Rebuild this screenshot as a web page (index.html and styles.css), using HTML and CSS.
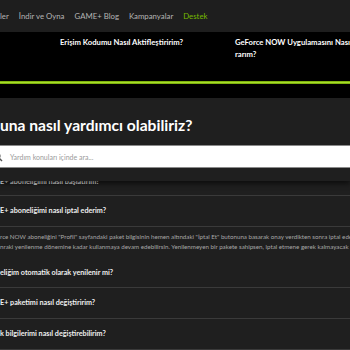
FILE: index.html
```html
<!DOCTYPE html>
<html lang="tr">
<head>
<meta charset="utf-8">
<link rel="stylesheet" href="styles.css">
</head>
<body>
<header class="nav">
  <span class="nav-item">ler</span>
  <span class="nav-item">İndir ve Oyna</span>
  <span class="nav-item">GAME+ Blog</span>
  <span class="nav-item">Kampanyalar</span>
  <span class="nav-item active">Destek</span>
</header>
<section class="articles">
  <div class="article-row">
    <div class="article a1">Erişim Kodumu Nasıl Aktifleştiririm?</div>
    <div class="article a2">GeForce NOW Uygulamasını Nası<br>rarım?</div>
  </div>
  <div class="green-bar"></div>
</section>
<section class="help">
  <div class="help-head">
    <h1 class="title">una nasıl yardımcı olabiliriz?</h1>
    <div class="search">
      <svg class="search-icon" width="10" height="10" viewBox="0 0 10 10"><circle cx="3" cy="4" r="3" fill="none" stroke="#555" stroke-width="1.2"/><line x1="5.2" y1="6.2" x2="8" y2="9" stroke="#555" stroke-width="1.4"/></svg>
      <span class="placeholder">Yardım konuları içinde ara...</span>
    </div>
  </div>
  <ul class="faq">
    <li class="q first">E+ aboneliğimi nasıl başlatırım?</li>
    <li class="q open">E+ aboneliğimi nasıl iptal ederim?</li>
    <li class="answer">rce NOW aboneliğini "Profil" sayfandaki paket bilgisinin hemen altındaki "İptal Et" butonuna basarak onay verdikten sonra iptal ede<br>nraki yenilenme dönemine kadar kullanmaya devam edebilirsin. Yenilenmeyen bir pakete sahipsen, iptal etmene gerek kalmayacak</li>
    <li class="q after">eliğim otomatik olarak yenilenir mi?</li>
    <li class="q">E+ paketimi nasıl değiştiririm?</li>
    <li class="q">k bilgilerimi nasıl değiştirebilirim?</li>
  </ul>
</section>
</body>
</html>
```

FILE: styles.css
```css
* { box-sizing: border-box; }
html, body { margin: 0; padding: 0; }
body {
  background: #1f1f1f;
  font-family: "Lato", "DejaVu Sans", sans-serif;
  overflow: hidden;
  width: 350px;
}
.nav {
  height: 32px;
  background: #1e1e1e;
  display: flex;
  align-items: center;
  gap: 10px;
  font-size: 7.8px;
  color: #b4b4b4;
  white-space: nowrap;
}
.nav-item.active { color: #76b900; }
.articles {
  background: #000;
  height: 66px;
  display: flex;
  flex-direction: column;
}
.article-row {
  display: flex;
  padding-top: 5px;
  height: 49px;
  white-space: nowrap;
  overflow: hidden;
}
.article {
  flex-shrink: 0;
  color: #fff;
  font-weight: 700;
  font-size: 7.7px;
  line-height: 11.5px;
}
.a1 { margin-left: 60px; width: 175px; }
.a2 { width: 115px; }
.green-bar {
  height: 3px;
  background: linear-gradient(#6c9e00, #a6dc2a 50%, #6c9e00);
}
.help-head {
  position: relative;
  z-index: 1;
  background: #1f1f1f;
  padding-top: 17px;
  padding-bottom: 13px;
  box-shadow: 0 3px 5px rgba(0,0,0,0.55);
}
.title {
  margin: 0 0 10px;
  color: #fff;
  font-size: 15.6px;
  font-weight: 700;
  line-height: 20px;
  white-space: nowrap;
}
.search {
  height: 23px;
  background: #fff;
  border-top: 1px solid #8a8a8a;
  border-bottom: 1px solid #8a8a8a;
  display: flex;
  align-items: center;
}
.search-icon { margin-left: -6px; margin-right: 6px; }
.placeholder { color: #9a9a9a; font-size: 7px; }
.faq {
  list-style: none;
  margin: -8px 0 0;
  padding: 0;
}
.q {
  color: #f0f0f0;
  font-weight: 700;
  font-size: 7.2px;
  height: 31px;
  line-height: 30px;
  border-bottom: 1px solid #3a3a3a;
  white-space: nowrap;
}
.q.first { height: 23px; line-height: 18px; }
.answer {
  color: #a8a8a8;
  font-size: 6.2px;
  line-height: 10px;
  padding-top: 5px;
  height: 37px;
  white-space: nowrap;
  overflow: hidden;
}
.q.after { line-height: 18px; height: 24px; }
```
